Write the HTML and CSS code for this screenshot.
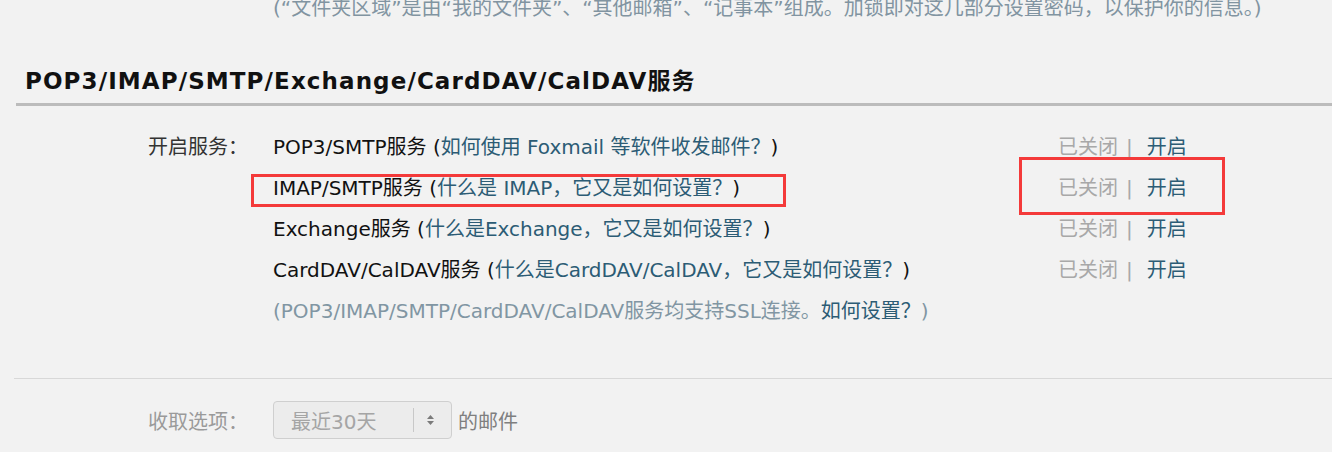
FILE: index.html
```html
<!DOCTYPE html>
<html lang="zh-CN">
<head>
<meta charset="utf-8">
<title>POP3/IMAP/SMTP/Exchange/CardDAV/CalDAV服务</title>
<link rel="stylesheet" href="styles.css">
</head>
<body>
<div class="page">
  <p class="lock-note">(“文件夹区域”是由“我的文件夹”、“其他邮箱”、“记事本”组成。加锁即对这几部分设置密码，以保护你的信息。)</p>

  <h2 class="section-title">POP3/IMAP/SMTP/Exchange/CardDAV/CalDAV服务</h2>

  <div class="services">
    <div class="label">开启服务：</div>
    <div class="svc">POP3/SMTP服务 (<a class="link">如何使用 Foxmail 等软件收发邮件？</a>)</div>
    <div class="status"><span class="off">已关闭</span><span class="sep">|</span><a class="link">开启</a></div>

    <div class="label"></div>
    <div class="svc">IMAP/SMTP服务 (<a class="link">什么是 IMAP，它又是如何设置？</a>)</div>
    <div class="status"><span class="off">已关闭</span><span class="sep">|</span><a class="link">开启</a></div>

    <div class="label"></div>
    <div class="svc">Exchange服务 (<a class="link">什么是Exchange，它又是如何设置？</a>)</div>
    <div class="status"><span class="off">已关闭</span><span class="sep">|</span><a class="link">开启</a></div>

    <div class="label"></div>
    <div class="svc">CardDAV/CalDAV服务 (<a class="link">什么是CardDAV/CalDAV，它又是如何设置？</a>)</div>
    <div class="status"><span class="off">已关闭</span><span class="sep">|</span><a class="link">开启</a></div>

    <div class="label"></div>
    <div class="svc hint">(POP3/IMAP/SMTP/CardDAV/CalDAV服务均支持SSL连接。<a class="link">如何设置？</a>)</div>
    <div class="status"></div>

    <div class="mark mark-imap"></div>
    <div class="mark mark-status"></div>
  </div>

  <div class="fetch">
    <div class="label muted">收取选项：</div>
    <div class="select">
      <span class="select-value">最近30天</span>
      <span class="select-divider"></span>
      <svg class="select-arrows" width="11" height="14" viewBox="0 0 11 14"><path d="M2 6 L5.5 2 L9 6 Z M2 8 L5.5 12 L9 8 Z" fill="#7a7a7a"/></svg>
    </div>
    <span class="fetch-tail">的邮件</span>
  </div>
</div>
</body>
</html>
```

FILE: styles.css
```css
html, body {
  margin: 0;
  padding: 0;
  background: #f2f2f2;
}

body {
  font-family: "DejaVu Sans", "Noto Sans CJK SC", sans-serif;
  font-size: 20px;
  color: #111;
  overflow: hidden;
  height: 452px;
}

.page {
  position: relative;
}

.lock-note {
  margin: -4px 0 0 0;
  padding-left: 273px;
  line-height: 24px;
  color: #8194a1;
  white-space: nowrap;
}

.section-title {
  margin: 46px 0 0 16px;
  padding: 0 0 7px 9px;
  font-size: 23px;
  letter-spacing: 1.1px;
  font-weight: bold;
  line-height: 30px;
  color: #111;
  border-bottom: 3px solid #bcbcbc;
}

.services {
  position: relative;
  margin-top: 21px;
  padding-left: 148px;
  display: grid;
  grid-template-columns: 125px 785px auto;
  grid-auto-rows: 41px;
  align-items: center;
  line-height: 41px;
}

.label {
  color: #333;
  white-space: nowrap;
}

.label.muted {
  color: #9a9a9a;
}

.svc {
  white-space: nowrap;
  color: #111;
}

.link {
  color: #2c5c75;
  text-decoration: none;
}

.hint {
  color: #8196a3;
}

.status {
  white-space: nowrap;
}

.off {
  color: #a8a8a8;
}

.sep {
  color: #a8a8a8;
  margin: 0 14px 0 8px;
}

.mark {
  position: absolute;
  border: 3px solid #f43a3a;
  box-sizing: border-box;
}

.mark-imap {
  left: 251px;
  top: 47px;
  width: 535px;
  height: 33px;
}

.mark-status {
  left: 1019px;
  top: 30px;
  width: 206px;
  height: 58px;
}

.fetch {
  margin: 46px 0 0 14px;
  border-top: 1px solid #d8d8d8;
  padding: 22px 0 0 134px;
  display: flex;
  align-items: center;
}

.fetch .label {
  width: 125px;
}

.select {
  box-sizing: border-box;
  width: 179px;
  height: 38px;
  border: 1px solid #cfcfcf;
  border-radius: 4px;
  background: #ececec;
  display: flex;
  align-items: center;
  padding-left: 17px;
}

.select-value {
  color: #a5a5a5;
  width: 122px;
  white-space: nowrap;
}

.select-divider {
  width: 1px;
  height: 24px;
  background: #c8c8c8;
}

.select-arrows {
  margin-left: 11px;
}

.fetch-tail {
  margin-left: 6px;
  color: #7f7f7f;
}
```
